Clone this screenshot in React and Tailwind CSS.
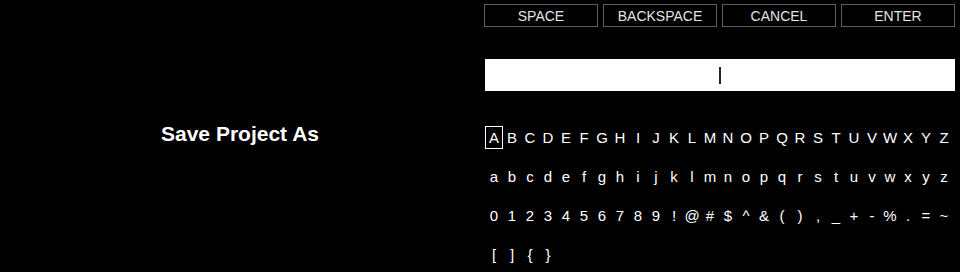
import { useState } from "react"

const rows = [
    "ABCDEFGHIJKLMNOPQRSTUVWXYZ".split(""),
    "abcdefghijklmnopqrstuvwxyz".split(""),
    "0123456789!@#$^&(),_+-%.=~".split(""),
    "[]{}".split(""),
]

const actions = ["SPACE", "BACKSPACE", "CANCEL", "ENTER"]

export default function App() {
    const [text, setText] = useState("")
    const [selected, setSelected] = useState("A")

    const press = (key) => {
        setSelected(key)
        setText((t) => t + key)
    }

    const action = (a) => {
        if (a === "SPACE") setText((t) => t + " ")
        if (a === "BACKSPACE") setText((t) => t.slice(0, -1))
        if (a === "CANCEL") setText("")
    }

    return (
        <div className="w-[960px] h-[272px] bg-black text-white flex overflow-hidden" style={{ fontFamily: "'Liberation Sans', Arial, sans-serif" }}>

            <div className="w-[480px] h-full flex items-center justify-center pb-[4px]">
                <h1 className="text-[21px] font-bold">Save Project As</h1>
            </div>

            <div className="w-[480px] flex flex-col pl-[4px] pr-[5px] pt-[4px]">
                <div className="grid grid-cols-4 gap-[5px]">
                    {actions.map((a) => (
                        <button
                            key={a}
                            onClick={() => action(a)}
                            className="h-[23px] border border-[#5f5f5f] text-[14px] text-[#e4e4e4] leading-none flex items-center justify-center"
                        >
                            {a}
                        </button>
                    ))}
                </div>

                <div className="mt-[32px] ml-[1px] h-[32px] bg-white flex items-center justify-center text-black text-[15px]">
                    <span>{text}</span>
                    <span className="w-[2px] h-[17px] bg-[#222]" />
                </div>

                <div className="mt-[35px] ml-[1px] flex flex-col gap-y-[16px]">
                    {rows.map((row, i) => (
                        <div key={i} className="grid grid-cols-[repeat(26,18px)]">
                            {row.map((k) => (
                                <button
                                    key={k}
                                    onClick={() => press(k)}
                                    className={
                                        "h-[23px] flex items-center justify-center text-[15px] leading-none " +
                                        (selected === k ? "border border-white" : "border border-transparent")
                                    }
                                >
                                    {k}
                                </button>
                            ))}
                        </div>
                    ))}
                </div>
            </div>
        </div>
    )
}
